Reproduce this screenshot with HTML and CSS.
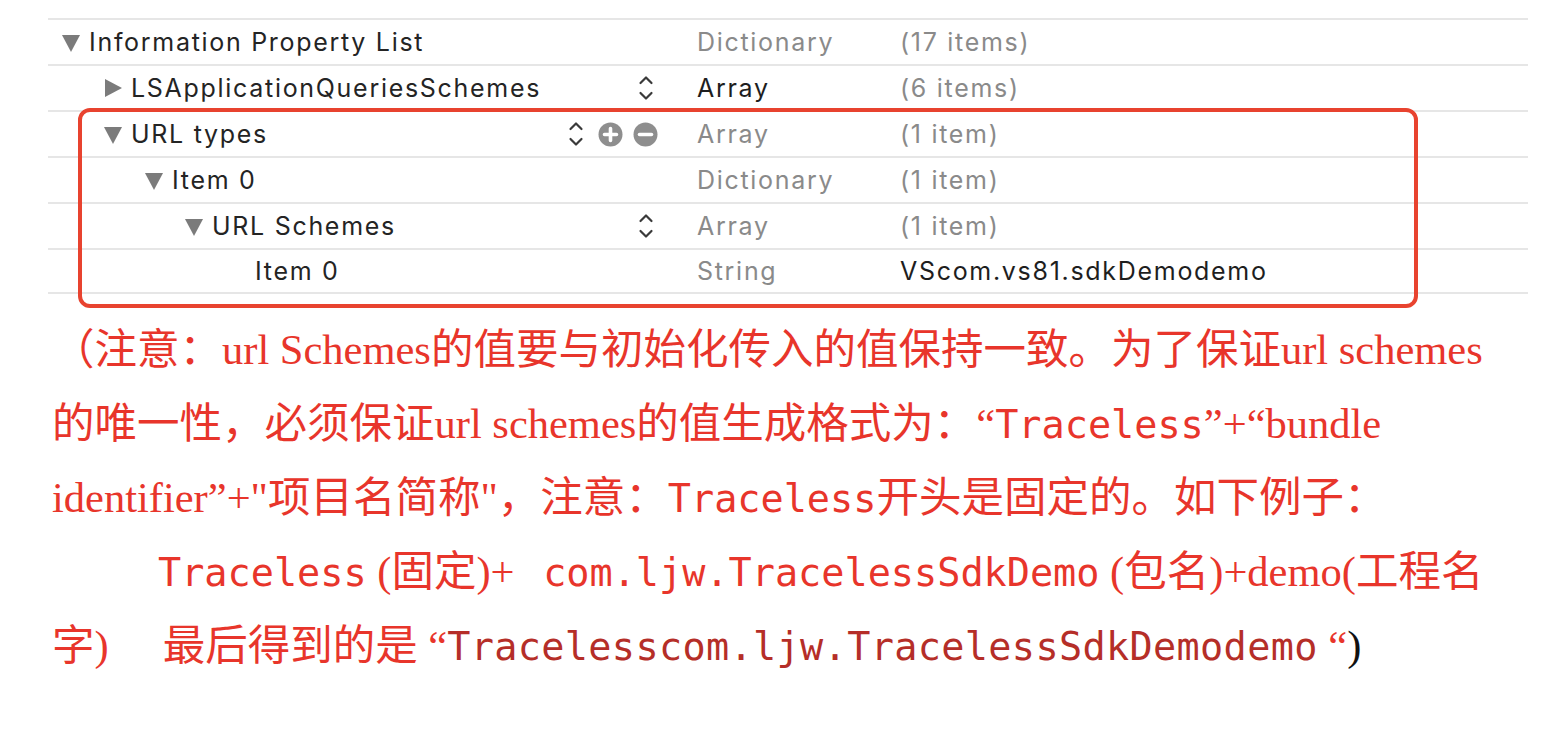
FILE: index.html
```html
<!DOCTYPE html>
<html lang="zh-CN">
<head>
<meta charset="utf-8">
<title>URL types</title>
<link rel="stylesheet" href="styles.css">
</head>
<body>
<div class="plist">
  <div class="row">
    <div class="key lvl0"><span class="tri down"></span><span class="name">Information Property List</span></div>
    <div class="type">Dictionary</div>
    <div class="val">(17 items)</div>
  </div>
  <div class="row">
    <div class="key lvl1"><span class="tri right"></span><span class="name">LSApplicationQueriesSchemes</span>
      <span class="ctrls">
        <span class="slot"><svg width="18" height="30" viewBox="0 0 18 30"><path d="M3.5 10 L9 4.5 L14.5 10 M3.5 20 L9 25.5 L14.5 20" fill="none" stroke="#3a3a3a" stroke-width="2.2" stroke-linecap="round" stroke-linejoin="round"/></svg></span>
      </span>
    </div>
    <div class="type strong">Array</div>
    <div class="val">(6 items)</div>
  </div>
  <div class="group">
    <div class="row">
      <div class="key lvl1"><span class="tri down"></span><span class="name">URL types</span>
        <span class="ctrls">
          <span class="slot"><svg width="18" height="30" viewBox="0 0 18 30"><path d="M3.5 10 L9 4.5 L14.5 10 M3.5 20 L9 25.5 L14.5 20" fill="none" stroke="#3a3a3a" stroke-width="2.2" stroke-linecap="round" stroke-linejoin="round"/></svg></span>
          <span class="slot"><svg width="25" height="25" viewBox="0 0 25 25"><circle cx="12.5" cy="12.5" r="12" fill="#8e8e8e"/><path d="M12.5 6.5 V18.5 M6.5 12.5 H18.5" stroke="#fff" stroke-width="3.6" stroke-linecap="round"/></svg></span>
          <span class="slot"><svg width="25" height="25" viewBox="0 0 25 25"><circle cx="12.5" cy="12.5" r="12" fill="#8e8e8e"/><path d="M6.5 12.5 H18.5" stroke="#fff" stroke-width="3.6" stroke-linecap="round"/></svg></span>
        </span>
      </div>
      <div class="type">Array</div>
      <div class="val">(1 item)</div>
    </div>
    <div class="row">
      <div class="key lvl2"><span class="tri down"></span><span class="name">Item 0</span></div>
      <div class="type">Dictionary</div>
      <div class="val">(1 item)</div>
    </div>
    <div class="row">
      <div class="key lvl3"><span class="tri down"></span><span class="name">URL Schemes</span>
        <span class="ctrls">
          <span class="slot"><svg width="18" height="30" viewBox="0 0 18 30"><path d="M3.5 10 L9 4.5 L14.5 10 M3.5 20 L9 25.5 L14.5 20" fill="none" stroke="#3a3a3a" stroke-width="2.2" stroke-linecap="round" stroke-linejoin="round"/></svg></span>
        </span>
      </div>
      <div class="type">Array</div>
      <div class="val">(1 item)</div>
    </div>
    <div class="row last">
      <div class="key lvl4"><span class="tri none"></span><span class="name">Item 0</span></div>
      <div class="type">String</div>
      <div class="val strong">VScom.vs81.sdkDemodemo</div>
    </div>
  </div>
</div>

<div class="note">
  <div class="ln">（注意：url Schemes的值要与初始化传入的值保持一致。为了保证url schemes</div>
  <div class="ln">的唯一性，必须保证url schemes的值生成格式为：“<span class="mono">Traceless</span>”+“bundle</div>
  <div class="ln">identifier”+"项目名简称"，注意：<span class="mono">Traceless</span>开头是固定的。如下例子：</div>
  <div class="ln indent"><span class="mono">Traceless</span> (固定)+ <span class="mono pad">com.ljw.TracelessSdkDemo</span> (包名)+demo(工程名</div>
  <div class="ln">字)<span class="gap"></span>最后得到的是 “<span class="mono dark">Tracelesscom.ljw.TracelessSdkDemodemo</span> “<span class="black">)</span></div>
</div>
</body>
</html>
```

FILE: styles.css
```css
* { box-sizing: border-box; }
html, body { margin: 0; padding: 0; background: #fff; }
body { width: 1566px; height: 754px; overflow: hidden; }

.plist {
  margin: 18px 0 0 48px;
  width: 1480px;
  font-family: "Inter", "Liberation Sans", sans-serif;
  font-size: 25px;
  letter-spacing: 1.7px;
  color: #242424;
}
.row {
  display: grid;
  grid-template-columns: 649px 203px 1fr;
  align-items: center;
  height: 46px;
  border-top: 2px solid #e6e6e6;
}
.row.last { border-bottom: 2px solid #e6e6e6; }
.key { display: flex; align-items: center; height: 100%; padding-right: 39px; }
.lvl0 { padding-left: 14px; }
.lvl1 { padding-left: 56px; }
.lvl2 { padding-left: 97px; }
.lvl3 { padding-left: 137px; }
.lvl4 { padding-left: 180px; }
.tri { flex: none; height: 0; width: 0; margin-right: 9px; }
.tri.down { border-left: 9px solid transparent; border-right: 9px solid transparent; border-top: 17px solid #7b7b7b; margin-top: 2px; }
.tri.right { border-top: 9px solid transparent; border-bottom: 9px solid transparent; border-left: 17px solid #7b7b7b; margin-left: 1px; margin-right: 9px; }
.tri.none { visibility: hidden; width: 18px; }
.name { white-space: nowrap; }
.ctrls { margin-left: auto; display: flex; align-items: center; gap: 10px; }
.slot { width: 25px; display: flex; justify-content: center; align-items: center; }
.slot svg { display: block; }
.type { color: #8a8a8a; }
.val { color: #8a8a8a; }
.type.strong, .val.strong { color: #1e1e1e; }

.group { position: relative; }
.group::after {
  content: "";
  position: absolute;
  left: 30px;
  top: -2px;
  width: 1332px;
  height: 192px;
  border: 4px solid #e8432f;
  border-radius: 12px;
  pointer-events: none;
}

.note {
  margin: 19px 0 0 52px;
  font-family: "Liberation Serif", "Noto Sans CJK SC", serif;
  font-size: 42.5px;
  line-height: 74px;
  color: #e8352b;
}
.ln { white-space: nowrap; }
.indent { padding-left: 106px; }
.mono { font-family: "DejaVu Sans Mono", "Noto Sans CJK SC", monospace; font-size: 38.5px; line-height: 1; }
.mono.pad { margin-left: 18px; }
.mono.dark { color: #b52e28; letter-spacing: 0.35px; }
.black { color: #111; }
.gap { display: inline-block; width: 54px; }
```
